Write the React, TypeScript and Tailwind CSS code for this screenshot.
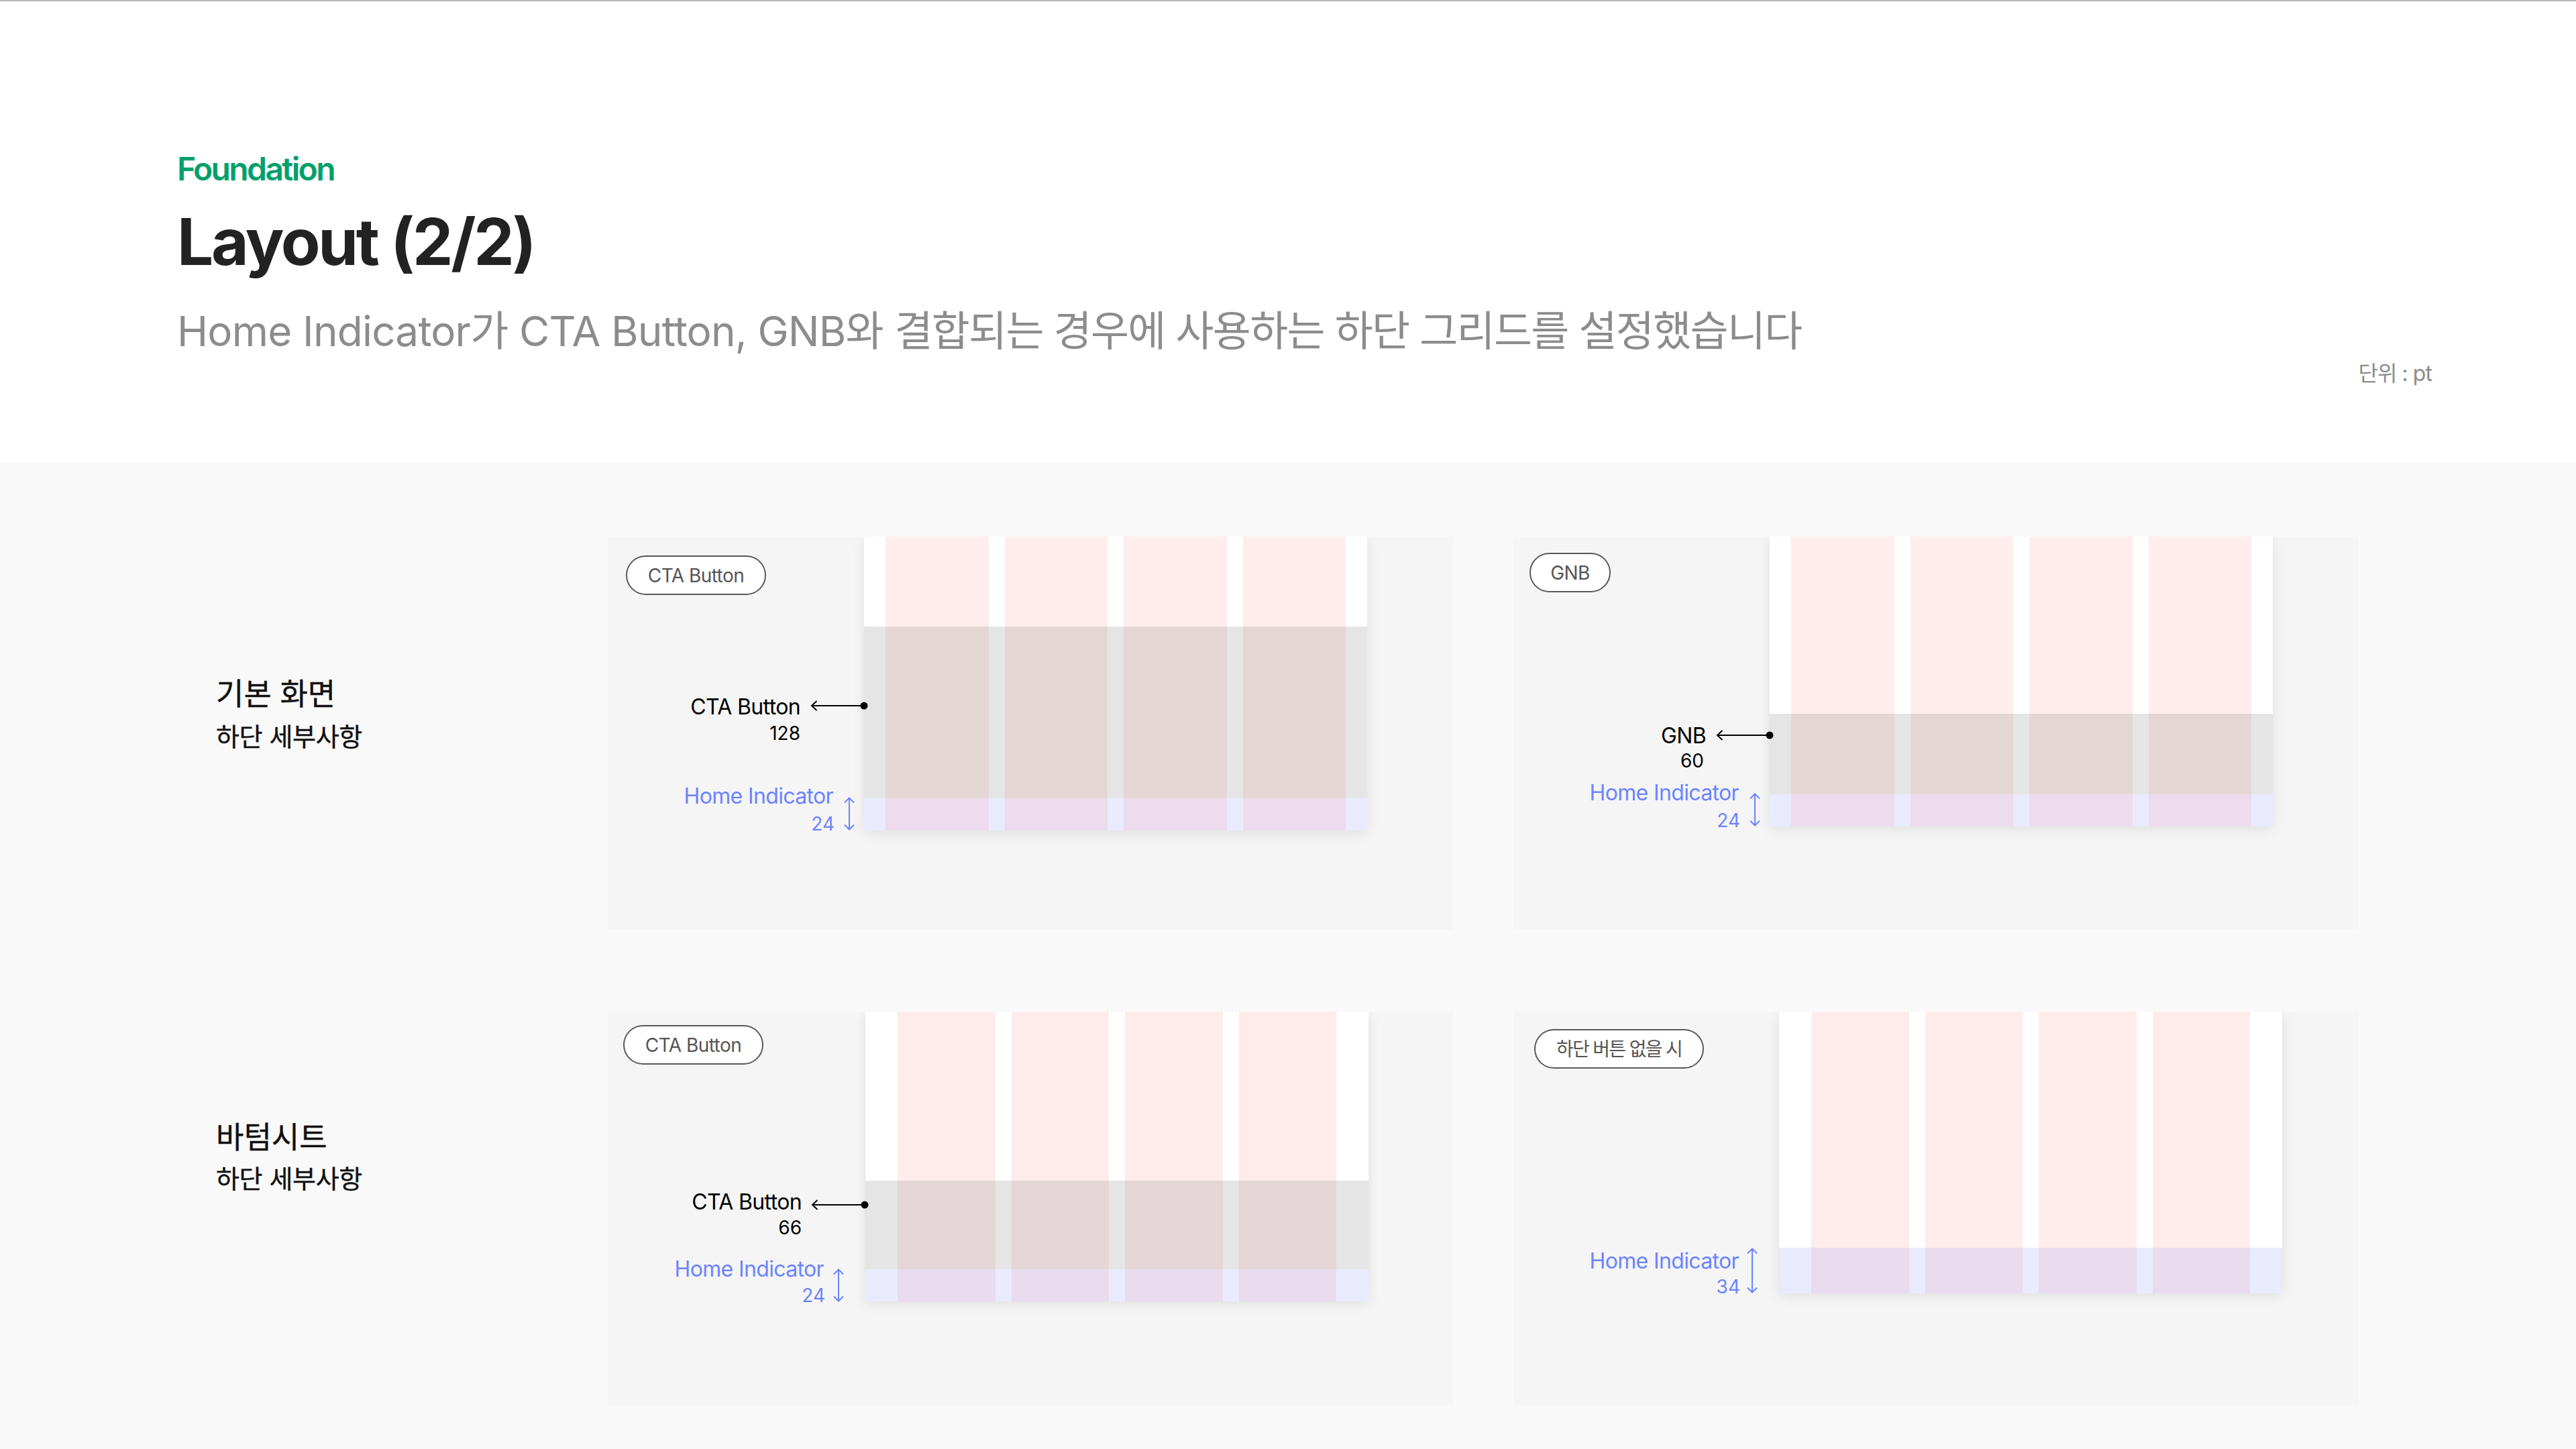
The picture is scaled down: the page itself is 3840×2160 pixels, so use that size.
import React from "react";

const FONT = "[font-family:Inter,'Noto_Sans_CJK_KR',sans-serif]";

function Pill({ className, children }: { className: string; children: React.ReactNode }) {
  return (
    <div className={`absolute flex h-[59px] items-center justify-center rounded-full border-2 border-[#595959] bg-white text-[28px] leading-none text-[#555555] ${className}`}>
      {children}
    </div>
  );
}

function Leader({ className }: { className: string }) {
  return (
    <svg className={`absolute ${className}`} width="88" height="16" viewBox="0 0 88 16" fill="none">
      <path d="M2 8H80" stroke="#000" strokeWidth="2" />
      <path d="M9.5 1L2 8L9.5 15" stroke="#000" strokeWidth="2" />
      <circle cx="80" cy="8" r="5.5" fill="#000" />
    </svg>
  );
}

function DoubleArrow({ className, height }: { className: string; height: number }) {
  return (
    <svg className={`absolute ${className}`} width="16" height={height} viewBox={`0 0 16 ${height}`} fill="none">
      <path d={`M8 2V${height - 2}`} stroke="#6b84ff" strokeWidth="2" />
      <path d={`M1 8.5L8 1.5L15 8.5M1 ${height - 8.5}L8 ${height - 1.5}L15 ${height - 8.5}`} stroke="#6b84ff" strokeWidth="2" />
    </svg>
  );
}

function Note({ className, title, value, tone, valueClass }: { className: string; title: string; value: string; tone: string; valueClass: string }) {
  return (
    <div className={`absolute flex flex-col items-end ${tone} ${className}`}>
      <span className="text-[32px] leading-[32px] tracking-[-0.02em] whitespace-nowrap">{title}</span>
      <span className={`text-[28px] leading-[28px] ${valueClass}`}>{value}</span>
    </div>
  );
}

function Strip({ w, top, band, ind, c }: { w: string; top: string; band: string; ind: string; c: [string, string, string] }) {
  return (
    <div className={`flex flex-col ${w}`}>
      <div className={`${top} ${c[0]}`} />
      <div className={`${band} ${c[1]}`} />
      <div className={`${ind} ${c[2]}`} />
    </div>
  );
}

function Phone({ margin, top, band, ind, pink }: { margin: string; top: string; band: string; ind: string; pink: [string, string, string] }) {
  const side: [string, string, string] = ["bg-white", "bg-[#e5e5e5]", "bg-[#e9ebfd]"];
  return (
    <div className="flex w-[750px] shadow-[0_4px_18px_rgba(0,0,0,0.09)]">
      <Strip w={margin} top={top} band={band} ind={ind} c={side} />
      <Strip w="flex-1" top={top} band={band} ind={ind} c={pink} />
      <Strip w="w-[24px]" top={top} band={band} ind={ind} c={side} />
      <Strip w="flex-1" top={top} band={band} ind={ind} c={pink} />
      <Strip w="w-[24px]" top={top} band={band} ind={ind} c={side} />
      <Strip w="flex-1" top={top} band={band} ind={ind} c={pink} />
      <Strip w="w-[24px]" top={top} band={band} ind={ind} c={side} />
      <Strip w="flex-1" top={top} band={band} ind={ind} c={pink} />
      <Strip w={margin} top={top} band={band} ind={ind} c={side} />
    </div>
  );
}

const PINK_A: [string, string, string] = ["bg-[#ffeded]", "bg-[#e5d6d6]", "bg-[#ecdcee]"];
const PINK_B: [string, string, string] = ["bg-[#feecec]", "bg-[#e4d6d6]", "bg-[#e8dcee]"];

function SideLabel({ className, title, subGap }: { className: string; title: string; subGap: string }) {
  return (
    <div className={`w-[906px] pl-[322px] text-[#111111] [-webkit-text-stroke:0.4px_#111111] ${className}`}>
      <div className="text-[45px] leading-[56px] font-normal">{title}</div>
      <div className={`text-[38px] leading-[48px] font-normal tracking-[-0.01em] ${subGap}`}>하단 세부사항</div>
    </div>
  );
}

export default function App() {
  return (
    <div className={`flex h-[2160px] w-[3840px] flex-col overflow-hidden bg-[#f9f9f9] ${FONT}`}>
      <header className="relative flex h-[690px] flex-col border-t-2 border-[#b5b5b5] bg-white pr-[215px] pl-[264px]">
        <div className="mt-[221px] text-[48px] leading-[58px] font-semibold tracking-[-0.055em] text-[#00a06a]">Foundation</div>
        <h1 className="mt-[21px] text-[96px] leading-[116px] font-bold tracking-[-0.034em] text-[#222222]">Layout (2/2)</h1>
        <p className="mt-[38px] text-[62px] leading-[76px] font-normal tracking-[-0.013em] text-[#8c8c8c]">
          Home Indicator가 CTA Button, GNB와{" "}
          <span className="tracking-[-0.027em]">결합되는 경우에 사용하는 하단 그리드를 설정했습니다</span>
        </p>
        <div className="mt-[5px] self-end text-[32px] leading-[40px] font-normal tracking-[-0.03em] text-[#8c8c8c]">단위 : pt</div>
      </header>

      <main className="flex flex-col gap-[122px] pt-[110px]">
        <section className="flex">
          <SideLabel className="pt-[207px]" subGap="mt-[11px]" title="기본 화면" />
          <div className="flex gap-[90px]">
            <div className="relative h-[586px] w-[1260px] overflow-hidden bg-[#f5f5f5] pl-[382px]">
              <Phone margin="w-[32px]" top="h-[134px]" band="h-[256px]" ind="h-[48px]" pink={PINK_A} />
              <Pill className="top-[28px] left-[27px] w-[209px] tracking-[-0.02em]">CTA Button</Pill>
              <Note className="top-[238px] right-[973px] gap-[9px]" tone="text-black" title="CTA Button" value="128" valueClass="mr-0" />
              <Leader className="top-[244px] left-[302px]" />
              <Note className="top-[371px] right-[924px] gap-[11px]" tone="text-[#6b84ff]" title="Home Indicator" value="24" valueClass="-mr-[2px]" />
              <DoubleArrow className="top-[388px] left-[352px]" height={50} />
            </div>
            <div className="relative h-[586px] w-[1260px] overflow-hidden bg-[#f5f5f5] pl-[382px]">
              <Phone margin="w-[32px]" top="h-[264px]" band="h-[120px]" ind="h-[48px]" pink={PINK_A} />
              <Pill className="top-[24px] left-[24px] w-[121px] tracking-[-0.02em]">GNB</Pill>
              <Note className="top-[281px] right-[973px] gap-[7px]" tone="text-black" title="GNB" value="60" valueClass="mr-[3px]" />
              <Leader className="top-[288px] left-[302px]" />
              <Note className="top-[366px] right-[924px] gap-[11px]" tone="text-[#6b84ff]" title="Home Indicator" value="24" valueClass="-mr-[2px]" />
              <DoubleArrow className="top-[382px] left-[352px]" height={50} />
            </div>
          </div>
        </section>

        <section className="flex">
          <SideLabel className="pt-[160px]" subGap="mt-[9px]" title="바텀시트" />
          <div className="flex gap-[90px]">
            <div className="relative h-[586px] w-[1260px] overflow-hidden bg-[#f5f5f5] pl-[384px]">
              <Phone margin="w-[48px]" top="h-[252px]" band="h-[132px]" ind="h-[48px]" pink={PINK_B} />
              <Pill className="top-[20px] left-[23px] w-[209px] tracking-[-0.02em]">CTA Button</Pill>
              <Note className="top-[268px] right-[971px] gap-[8px]" tone="text-black" title="CTA Button" value="66" valueClass="mr-0" />
              <Leader className="top-[280px] left-[303px]" />
              <Note className="top-[368px] right-[938px] gap-[9px]" tone="text-[#6b84ff]" title="Home Indicator" value="24" valueClass="-mr-[2px]" />
              <DoubleArrow className="top-[383px] left-[336px]" height={50} />
            </div>
            <div className="relative h-[586px] w-[1260px] overflow-hidden bg-[#f5f5f5] pl-[396px]">
              <Phone margin="w-[48px]" top="h-[352px]" band="h-0" ind="h-[68px]" pink={PINK_B} />
              <Pill className="top-[26px] left-[31px] w-[253px] tracking-[-0.06em]">하단 버튼 없을 시</Pill>
              <Note className="top-[356px] right-[924px] gap-[8px]" tone="text-[#6b84ff]" title="Home Indicator" value="34" valueClass="-mr-[2px]" />
              <DoubleArrow className="top-[352px] left-[348px]" height={68} />
            </div>
          </div>
        </section>
      </main>
    </div>
  );
}
